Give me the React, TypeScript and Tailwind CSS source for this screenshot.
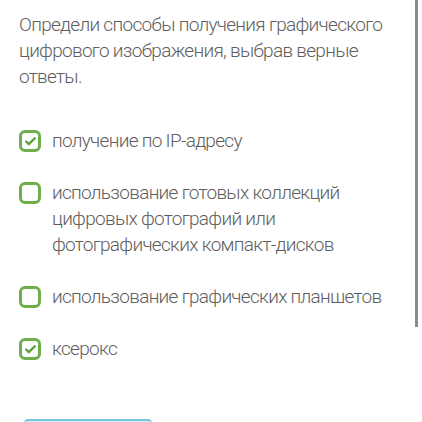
import { Check } from 'lucide-react';

const options = [
  { text: 'получение по IP-адресу', checked: true },
  {
    text: 'использование готовых коллекций цифровых фотографий или фотографических компакт-дисков',
    checked: false,
  },
  { text: 'использование графических планшетов', checked: false },
  { text: 'ксерокс', checked: true },
];

function Box({ checked }: { checked: boolean }) {
  return (
    <div className="w-[22px] h-[22px] shrink-0 rounded-[6px] border-[3px] border-[#6fae4a] flex items-center justify-center mt-[2px]">
      {checked && <Check className="w-[13px] h-[13px] text-[#5fa33a]" strokeWidth={4.5} />}
    </div>
  );
}

export default function App() {
  return (
    <div
      className="relative w-[422px] h-[422px] overflow-hidden bg-white text-[#5e5e5e]"
      style={{ fontFamily: 'Roboto, "Liberation Sans", sans-serif' }}
    >
      <div className="pl-[19px] pr-[30px] pt-[12px]">
        <p className="text-[19px] leading-[26px] font-light tracking-[-0.7px]">
          Определи способы получения графического цифрового изображения, выбрав верные ответы.
        </p>

        <div className="mt-[38px] flex flex-col gap-[26px]">
          {options.map((o) => (
            <div key={o.text} className="flex items-start gap-[11px]">
              <Box checked={o.checked} />
              <span className="text-[19px] leading-[26px] font-light tracking-[-0.7px]">{o.text}</span>
            </div>
          ))}
        </div>
      </div>

      {/* scrollbar */}
      <div className="absolute right-[4px] top-0 w-[3px] h-[327px] bg-[#8a8a8a]" />

      {/* button top edge */}
      <div className="absolute left-[24px] top-[419px] w-[128px] h-[20px] rounded-t-[4px] bg-[#cdeef8] border-t-2 border-[#7cc7e0]" />
    </div>
  );
}
